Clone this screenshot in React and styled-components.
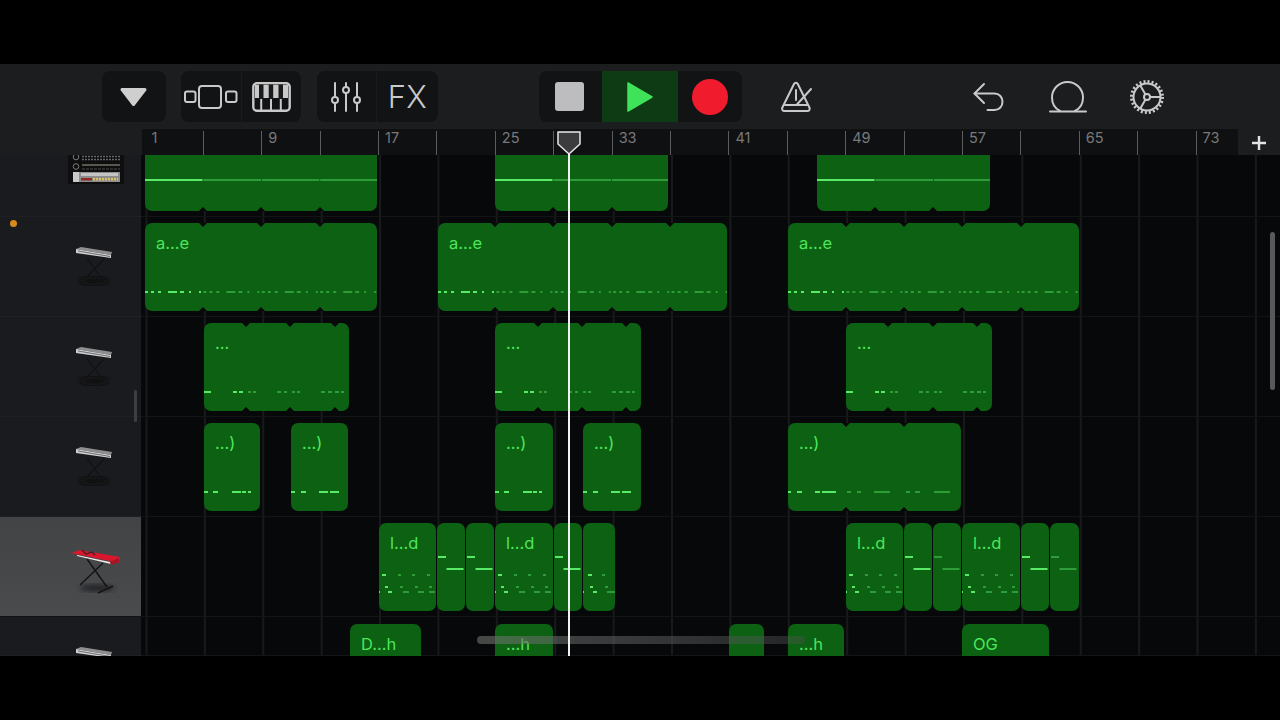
import React from 'react';
import styled, { createGlobalStyle } from 'styled-components';

const GlobalStyle = createGlobalStyle`
  html, body {
    margin: 0;
    background: #000;
  }
  * {
    box-sizing: border-box;
  }
`;

const Screen = styled.div`
  width: 1280px;
  height: 720px;
  padding: 64px 0;
  background: #000;
  font-family: Inter, "Liberation Sans", sans-serif;
  overflow: hidden;
`;

const AppFrame = styled.div`
  height: 592px;
  display: flex;
  flex-direction: column;
  background: #1b1c1e;
`;

// toolbar

const Toolbar = styled.header`
  height: 65px;
  flex: none;
  display: flex;
  align-items: flex-start;
  padding: 7px 0 0 102px;
  background: #1b1d1f;
`;

const Group = styled.div`
  display: flex;
  height: 51px;
  width: ${({ $w }) => $w}px;
  margin-left: ${({ $gap }) => $gap || 0}px;
  border-radius: 8px;
  background: #121315;
  overflow: hidden;
`;

const Cell = styled.div`
  flex: ${({ $w }) => ($w ? `0 0 ${$w}px` : 1)};
  display: flex;
  align-items: center;
  justify-content: center;
  padding-right: ${({ $nudge }) => $nudge || 0}px;
  color: #c9c9ca;
  background: ${({ $active }) => ($active ? '#0e3a14' : 'transparent')};
  border-left: ${({ $split }) => ($split ? '1px solid #1a1b1d' : 'none')};
`;

const FxLabel = styled.span`
  font-size: 31px;
  font-weight: 300;
  letter-spacing: 0.5px;
  line-height: 1;
`;

const ToolIcon = styled.div`
  flex: none;
  width: 44px;
  height: 51px;
  margin-left: ${({ $gap }) => $gap}px;
  display: flex;
  align-items: center;
  justify-content: center;
  color: #c9c9ca;
`;

const stroke = {
  fill: 'none',
  stroke: 'currentColor',
  strokeLinecap: 'round',
  strokeLinejoin: 'round',
};

const DownTriangle = () => (
  <svg width="29" height="20" viewBox="0 0 29 20">
    <path d="M3 2.5h23L14.5 17.5z" fill="#cfcfd0" stroke="#cfcfd0" strokeWidth="3" strokeLinejoin="round" />
  </svg>
);

const TracksIcon = () => (
  <svg width="54" height="26" viewBox="0 0 54 26" {...stroke} strokeWidth="2">
    <rect x="1" y="7.5" width="10.5" height="10.5" rx="2" />
    <rect x="15" y="2" width="22" height="22" rx="3" />
    <rect x="42" y="7.5" width="10.5" height="10.5" rx="2" />
  </svg>
);

const PianoIcon = () => (
  <svg width="39" height="30" viewBox="0 0 39 30">
    <rect x="1.3" y="1.3" width="36.4" height="27.4" rx="3.5" fill="#121315" stroke="currentColor" strokeWidth="2.4" />
    <path d="M3 3h33v13H3z" fill="#c9c9ca" />
    <path d="M7 2.5h4.5v15H7zM16.7 2.5h4.5v15h-4.5zM26.5 2.5H31v15h-4.5z" fill="#1a1b1d" />
    <path d="M9.2 17v11M19 17v11M28.8 17v11" stroke="currentColor" strokeWidth="2" />
  </svg>
);

const MixerIcon = () => (
  <svg width="32" height="30" viewBox="0 0 32 30" {...stroke} strokeWidth="2">
    <path d="M5 1v14M5 21v8M16 1v4M16 11v18M27 1v14M27 21v8" />
    <circle cx="5" cy="18" r="3" />
    <circle cx="16" cy="8" r="3" />
    <circle cx="27" cy="18" r="3" />
  </svg>
);

const StopSquare = styled.div`
  width: 29px;
  height: 29px;
  border-radius: 3px;
  background: #bdbcbe;
`;

const PlayTriangle = () => (
  <svg width="28" height="32" viewBox="0 0 28 32">
    <path d="M2 2l24 14L2 30z" fill="#3fe35a" stroke="#3fe35a" strokeWidth="1.5" strokeLinejoin="round" />
  </svg>
);

const RecordDot = styled.div`
  width: 36px;
  height: 36px;
  border-radius: 50%;
  background: #f01b2d;
`;

const MetronomeIcon = () => (
  <svg width="34" height="32" viewBox="0 0 34 32" {...stroke} strokeWidth="2">
    <path d="M13 3c.8-1.600 3-1.600 3.800 0l11.600 23.500c.8 1.900-.2 3.500-2 3.500H3.400c-1.800 0-2.800-1.600-2-3.500z" />
    <path d="M4 24h22" />
    <path d="M15 9v10" />
    <path d="M15.500 24L30 8" />
  </svg>
);

const UndoIcon = () => (
  <svg width="34" height="32" viewBox="0 0 34 32" {...stroke} strokeWidth="2">
    <path d="M12 3L2.500 12.500 12 22" />
    <path d="M2.500 12.500h20c5 0 8 3.800 8 8.200s-3 8.300-8 8.300h-7" />
  </svg>
);

const LoopIcon = () => (
  <svg width="40" height="34" viewBox="0 0 40 34" {...stroke} strokeWidth="2">
    <path d="M12 31C7 28.500 4 23.500 4 17.500 4 9 11 2 19.500 2S35 9 35 17.500c0 6-3 11-8 13.500" />
    <path d="M2 31.500h36" />
  </svg>
);

const GearIcon = () => (
  <svg width="36" height="36" viewBox="0 0 36 36" fill="none" stroke="currentColor">
    <circle cx="18" cy="18" r="13.500" strokeWidth="2" />
    <circle cx="18" cy="18" r="15.500" strokeWidth="3" strokeDasharray="2 2.060" />
    <circle cx="18" cy="18" r="3" strokeWidth="2" />
    <path d="M21 18h11M16.500 15.400L11 6M16.500 20.600L11 30" strokeWidth="2" />
  </svg>
);

// ruler

const Arrange = styled.div`
  position: relative;
  flex: 1;
  min-height: 0;
  display: flex;
  flex-direction: column;
  overflow: hidden;
`;

const RulerRow = styled.div`
  height: 26px;
  flex: none;
  display: flex;
`;

const RulerCorner = styled.div`
  flex: 0 0 142px;
  background: #1b1d1f;
`;

const Ruler = styled.div`
  flex: 1;
  display: flex;
  padding-left: 3.500px;
  background: #0f1012;
  overflow: hidden;
`;

const RulerCell = styled.div`
  flex: 0 0 58.4px;
  margin-top: 2px;
  padding-left: 6px;
  border-right: 1.5px solid #5c5d5f;
  color: #78797b;
  font-size: 14.5px;
  line-height: 14px;
`;

const AddButton = styled.div`
  flex: 0 0 42px;
  display: flex;
  align-items: center;
  justify-content: center;
  padding-top: 2px;
  color: #e4e4e5;
  background: #1b1d1f;
`;

// tracks

const TrackList = styled.div`
  flex: 1;
  min-height: 0;
  display: flex;
  flex-direction: column;
`;

const TrackRow = styled.div`
  flex: 0 0 ${({ $h }) => $h}px;
  display: flex;
  overflow: hidden;
`;

const TrackHeader = styled.div`
  flex: 0 0 141px;
  display: flex;
  align-items: flex-start;
  padding: ${({ $selected, $flush }) => ($flush ? '0 0 0 68px' : $selected ? '30px 0 0 70px' : '26px 0 0 72px')};
  background: ${({ $selected }) => ($selected ? 'linear-gradient(#424345, #4a4b4d)' : '#1a1b1e')};
  border-bottom: 1px solid ${({ $selected }) => ($selected ? '#101113' : '#1f2023')};
`;

const Lane = styled.div`
  position: relative;
  flex: 1;
  background-color: #07080a;
  background-image: linear-gradient(to right, #18191b 1.5px, transparent 1.5px);
  background-size: 58.4px 100%;
  background-position: 4.500px 0;
  border-bottom: 1px solid #131416;
`;

const Region = styled.div.attrs(({ $from, $to, $top }) => ({
  style: { left: $from - 141, width: $to - $from, top: $top },
}))`
  position: absolute;
  height: 88px;
  padding: 11px 0 0 11px;
  border-radius: 7px;
  background: #0c6112;
  color: #4ee65c;
  font-size: 16.500px;
  line-height: 18px;
  overflow: hidden;
`;

const NoteLayer = styled.svg`
  position: absolute;
  top: 0;
  left: 0;
  width: 100%;
  height: 100%;
`;

const Notch = styled.span.attrs(({ $x }) => ({ style: { left: $x - 4 } }))`
  position: absolute;
  width: 8px;
  height: 4px;
  background: #07080a;
  ${({ $bottom }) =>
    $bottom
      ? 'bottom: 0; clip-path: polygon(50% 0, 100% 100%, 0 100%);'
      : 'top: 0; clip-path: polygon(0 0, 100% 0, 50% 100%);'}
`;

const Playhead = styled.div`
  position: absolute;
  left: 557px;
  top: 2px;
  bottom: 0;
  width: 24px;
  display: flex;
  justify-content: center;
  &::after {
    content: '';
    position: absolute;
    top: 23px;
    bottom: 0;
    left: 11px;
    width: 2px;
    background: #f2f2f2;
  }
`;

const Scrollbar = styled.div`
  position: absolute;
  left: ${({ $x }) => $x}px;
  top: ${({ $y }) => $y}px;
  width: ${({ $w }) => $w}px;
  height: ${({ $h }) => $h}px;
  border-radius: 4px;
  background: ${({ $bg }) => $bg};
`;

const RecordLed = styled.div`
  position: absolute;
  left: 10px;
  top: 91px;
  width: 7px;
  height: 7px;
  border-radius: 50%;
  background: #d98a1e;
`;

const DrumMachine = () => (
  <svg width="56" height="30" viewBox="0 0 56 30">
    <rect x="0" y="0" width="56" height="29" rx="1" fill="#0e0e0f" />
    <circle cx="8" cy="2" r="2.800" fill="none" stroke="#7a7a7a" />
    <circle cx="8" cy="11.500" r="2.800" fill="none" stroke="#7a7a7a" />
    <path d="M14 1.500h38M14 4.500h38" stroke="#66676a" strokeWidth="1.400" strokeDasharray="2 1" />
    <path d="M14 10h38" stroke="#a0a090" strokeWidth="1.200" />
    <path d="M14 14h38" stroke="#4c4c4c" strokeWidth="1" strokeDasharray="3 1" />
    <rect x="5" y="17" width="47" height="10" fill="#8d8d8d" />
    <rect x="5" y="17" width="6" height="10" fill="#c9c9c9" />
    <rect x="13" y="18" width="37" height="3" fill="#c4c4c4" />
    <rect x="13" y="23" width="11" height="2.500" fill="#8e2b22" />
    <path d="M25 24.200h25" stroke="#d8c060" strokeWidth="2.500" strokeDasharray="2 1" />
  </svg>
);

const GrayKeyboard = () => (
  <svg width="46" height="52" viewBox="0 0 46 52">
    <defs>
      <filter id="grayShadow"><feGaussianBlur stdDeviation="2.500" /></filter>
    </defs>
    <ellipse cx="22" cy="38" rx="14" ry="4" fill="#0e0f10" filter="url(#grayShadow)" />
    <path d="M15 15l17 24M32 16L14 35" stroke="#111214" strokeWidth="1.200" />
    <path d="M4 6l5-2 31 5-1 3z" fill="#8e8e90" />
    <path d="M4 6l35 6v3L4 10z" fill="#cfcfd1" />
    <path d="M6 8l32 5.500" stroke="#55565a" strokeWidth="0.800" />
  </svg>
);

const RedKeyboard = () => (
  <svg width="54" height="52" viewBox="0 0 54 52">
    <defs>
      <filter id="redShadow"><feGaussianBlur stdDeviation="2.500" /></filter>
    </defs>
    <ellipse cx="27" cy="41" rx="17" ry="3.500" fill="#232426" filter="url(#redShadow)" />
    <path d="M17 12l20 28M33 16L10 38M28 46l15-7" stroke="#141415" strokeWidth="1.500" />
    <path d="M1 6l9-3 40 7-1 6z" fill="#d9162c" />
    <path d="M7 8l33 7 1 2L7 9z" fill="#f0e9e9" />
    <path d="M40 15l9-4v4l-8 3z" fill="#a71222" />
    <path d="M12 3l4 4 6-2 3 3" stroke="#3a2226" strokeWidth="1.200" fill="none" />
  </svg>
);

// note data, x and width relative to the region

const loop = (pattern, y, seg, count) => {
  const out = [];
  for (let i = 0; i < count; i++) {
    pattern.forEach(([x, w]) => out.push([x + i * seg, y, w, i > 0]));
  }
  return out;
};

const beatLine = (count) => loop([[0, 57.500]], 56, 58.400, count);
const leadNotes = (count) => loop([[0, 3], [6, 3], [13, 3], [23, 9], [35, 4], [44, 2], [54, 2]], 68, 58.400, count);

const padNotes = [
  [0, 68, 7], [29, 68, 4], [35, 68, 4],
  [44, 68, 3, 1], [49, 68, 3, 1], [73, 68, 4, 1], [80, 68, 3, 1], [88, 68, 3, 1], [93, 68, 3, 1],
  [117, 68, 4, 1], [124, 68, 4, 1], [131, 68, 4, 1], [137, 68, 3, 1],
];

const stabNotes = [[0, 68, 4], [9, 68, 5], [28, 68, 9], [38, 68, 4], [44, 68, 3]];
const stabNotesAlt = [[0, 68, 4], [10, 68, 5], [28, 68, 9], [39, 68, 9]];
const stabLong = [
  [0, 68, 3], [9, 68, 5], [27, 68, 5], [34, 68, 5], [39, 68, 9],
  [59, 68, 4, 1], [69, 68, 4, 1], [86, 68, 6, 1], [92, 68, 10, 1],
  [118, 68, 4, 1], [127, 68, 5, 1], [146, 68, 16, 1],
];

const leadTail = [
  [3, 51, 4], [19, 51, 3, 1], [33, 51, 3, 1], [48, 51, 3, 1],
  [6, 63, 3], [21, 63, 3, 1], [36, 63, 3, 1], [50, 63, 3, 1],
  [0, 68, 1], [9, 68, 4], [24, 68, 6, 1], [39, 68, 6, 1], [50, 68, 6, 1],
];
const shortTail = [
  [5, 51, 4], [19, 51, 3, 1],
  [7, 63, 3], [22, 63, 3, 1],
  [0, 68, 1], [10, 68, 4], [24, 68, 8, 1],
];

const hook = (dim) => [[1, 33, 8, dim], [9.500, 45, 17, dim]];

const rows = [
  {
    h: 62,
    top: -32,
    flush: true,
    icon: <DrumMachine />,
    regions: [
      { from: 145, to: 377, seams: [203, 261, 320], notes: beatLine(4) },
      { from: 495, to: 668, seams: [553, 612], notes: beatLine(3) },
      { from: 817, to: 990, seams: [875, 933], notes: beatLine(3) },
    ],
  },
  {
    h: 100,
    top: 6,
    icon: <GrayKeyboard />,
    regions: [
      { from: 145, to: 377, label: 'a…e', seams: [203, 261, 320], notes: leadNotes(4) },
      { from: 438, to: 727, label: 'a…e', seams: [495, 553, 612, 670], notes: leadNotes(5) },
      { from: 788, to: 1079, label: 'a…e', seams: [846, 904, 962, 1021], notes: leadNotes(5) },
    ],
  },
  {
    h: 100,
    top: 6,
    icon: <GrayKeyboard />,
    regions: [
      { from: 204, to: 349, label: '…', seams: [246, 290, 335], notes: padNotes },
      { from: 495, to: 641, label: '…', seams: [538, 582, 626], notes: padNotes },
      { from: 846, to: 992, label: '…', seams: [888, 933, 977], notes: padNotes },
    ],
  },
  {
    h: 100,
    top: 6,
    icon: <GrayKeyboard />,
    regions: [
      { from: 204, to: 260, label: '…)', notes: stabNotes },
      { from: 291, to: 348, label: '…)', notes: stabNotesAlt },
      { from: 495, to: 553, label: '…)', notes: stabNotes },
      { from: 583, to: 641, label: '…)', notes: stabNotesAlt },
      { from: 788, to: 961, label: '…)', seams: [846, 904], notes: stabLong },
    ],
  },
  {
    h: 100,
    top: 6,
    selected: true,
    icon: <RedKeyboard />,
    regions: [
      { from: 379, to: 436, label: 'l…d', notes: leadTail },
      { from: 437, to: 465, notes: hook() },
      { from: 466, to: 494, notes: hook() },
      { from: 495, to: 553, label: 'l…d', notes: leadTail },
      { from: 554, to: 582, notes: hook() },
      { from: 583, to: 615, notes: shortTail },
      { from: 846, to: 903, label: 'l…d', notes: leadTail },
      { from: 904, to: 932, notes: hook() },
      { from: 933, to: 961, notes: hook(1) },
      { from: 962, to: 1020, label: 'l…d', notes: leadTail },
      { from: 1021, to: 1049, notes: hook() },
      { from: 1050, to: 1079, notes: hook(1) },
    ],
  },
  {
    h: 39,
    top: 7,
    icon: <GrayKeyboard />,
    regions: [
      { from: 350, to: 421, label: 'D…h' },
      { from: 495, to: 553, label: '…h' },
      { from: 729, to: 764 },
      { from: 788, to: 844, label: '…h' },
      { from: 962, to: 1049, label: 'OG' },
    ],
  },
];

const rulerCells = Array.from({ length: 20 }, (_, i) => (i % 2 === 0 ? i * 4 + 1 : ''));

const RegionBlock = ({ region, top }) => (
  <Region $from={region.from} $to={region.to} $top={top}>
    {region.notes && (
      <NoteLayer>
        {region.notes.map(([x, y, w, dim], i) => (
          <rect key={i} x={x} y={y} width={w} height="2" fill={dim ? '#2f9c3a' : '#58ea66'} />
        ))}
      </NoteLayer>
    )}
    {region.label}
    {(region.seams || []).map((seam) => (
      <React.Fragment key={seam}>
        <Notch $x={seam - region.from} />
        <Notch $x={seam - region.from} $bottom />
      </React.Fragment>
    ))}
  </Region>
);

const App = () => (
  <Screen>
    <GlobalStyle />
    <AppFrame>
      <Toolbar>
        <Group $w={64}>
          <Cell $nudge={2}><DownTriangle /></Cell>
        </Group>
        <Group $w={120} $gap={15}>
          <Cell $w={60}><TracksIcon /></Cell>
          <Cell $split><PianoIcon /></Cell>
        </Group>
        <Group $w={121} $gap={16}>
          <Cell $w={59} $nudge={2}><MixerIcon /></Cell>
          <Cell $split><FxLabel>FX</FxLabel></Cell>
        </Group>
        <Group $w={203} $gap={101}>
          <Cell $w={63} $nudge={3}><StopSquare /></Cell>
          <Cell $w={76} $active><PlayTriangle /></Cell>
          <Cell><RecordDot /></Cell>
        </Group>
        <ToolIcon $gap={34}><MetronomeIcon /></ToolIcon>
        <ToolIcon $gap={147}><UndoIcon /></ToolIcon>
        <ToolIcon $gap={35}><LoopIcon /></ToolIcon>
        <ToolIcon $gap={35}><GearIcon /></ToolIcon>
      </Toolbar>
      <Arrange>
        <RulerRow>
          <RulerCorner />
          <Ruler>
            {rulerCells.map((label, i) => (
              <RulerCell key={i}>{label}</RulerCell>
            ))}
          </Ruler>
          <AddButton>
            <svg width="14" height="14" viewBox="0 0 14 14">
              <path d="M7 0v14M0 7h14" stroke="currentColor" strokeWidth="2.400" />
            </svg>
          </AddButton>
        </RulerRow>
        <TrackList>
          {rows.map((row, i) => (
            <TrackRow key={i} $h={row.h}>
              <TrackHeader $selected={row.selected} $flush={row.flush}>{row.icon}</TrackHeader>
              <Lane>
                {row.regions.map((region) => (
                  <RegionBlock key={region.from} region={region} top={row.top} />
                ))}
              </Lane>
            </TrackRow>
          ))}
        </TrackList>
        <RecordLed />
        <Scrollbar $x={134} $y={261} $w={3} $h={32} $bg="#3d3e40" />
        <Scrollbar $x={1270} $y={103} $w={5} $h={158} $bg="#58595b" />
        <Scrollbar
          $x={477}
          $y={507}
          $w={328}
          $h={8}
          $bg="linear-gradient(to right, rgba(110,115,110,0.6), rgba(85,90,85,0.55) 60%, rgba(80,80,80,0.4))"
        />
        <Playhead>
          <svg width="24" height="24" viewBox="0 0 24 24">
            <path d="M1 1h22v12L12 23 1 13z" fill="#3c3c3e" stroke="#e8e8e8" strokeWidth="1.500" strokeLinejoin="round" />
          </svg>
        </Playhead>
      </Arrange>
    </AppFrame>
  </Screen>
);

export default App;
